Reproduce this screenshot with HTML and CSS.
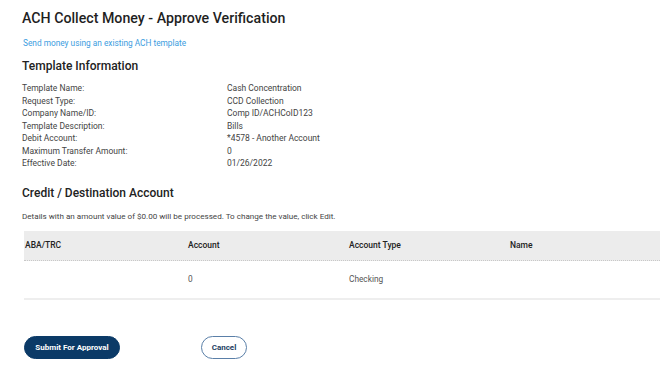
FILE: index.html
```html
<!DOCTYPE html>
<html>
<head>
<meta charset="utf-8">
<link rel="stylesheet" href="styles.css">
</head>
<body>
<main class="page">
  <h1 class="title">ACH Collect Money - Approve Verification</h1>
  <a class="link" href="#">Send money using an existing ACH template</a>
  <h2 class="section">Template Information</h2>
  <dl class="info">
    <dt>Template Name:</dt><dd>Cash Concentration</dd>
    <dt>Request Type:</dt><dd>CCD Collection</dd>
    <dt>Company Name/ID:</dt><dd>Comp ID/ACHCoID123</dd>
    <dt>Template Description:</dt><dd>Bills</dd>
    <dt>Debit Account:</dt><dd>*4578 - Another Account</dd>
    <dt>Maximum Transfer Amount:</dt><dd>0</dd>
    <dt>Effective Date:</dt><dd>01/26/2022</dd>
  </dl>
  <h2 class="section section-credit">Credit / Destination Account</h2>
  <p class="note">Details with an amount value of $0.00 will be processed. To change the value, click Edit.</p>
  <div class="table">
    <div class="thead">
      <div>ABA/TRC</div><div>Account</div><div>Account Type</div><div>Name</div>
    </div>
    <div class="trow">
      <div></div><div>0</div><div>Checking</div><div></div>
    </div>
  </div>
  <div class="actions">
    <button class="btn btn-primary">Submit For Approval</button>
    <button class="btn btn-secondary">Cancel</button>
  </div>
</main>
</body>
</html>
```

FILE: styles.css
```css
* { box-sizing: border-box; }
body {
  margin: 0;
  background: #fff;
  font-family: Roboto, "Liberation Sans", sans-serif;
  color: #333;
}
.page {
  padding: 8px 0 0 22px;
  display: flex;
  flex-direction: column;
  align-items: flex-start;
}
.title {
  margin: 0;
  font-size: 14.2px;
  font-weight: 500;
  color: #1f1f1f;
  line-height: 20px;
}
.link {
  margin: 9px 0 0 1px;
  font-size: 8.3px;
  color: #3b9de0;
  text-decoration: none;
  line-height: 12px;
}
.section {
  margin: 9px 0 0 0;
  font-size: 12px;
  font-weight: 500;
  color: #222;
  line-height: 16px;
}
.info {
  margin: 8px 0 0 0;
  display: grid;
  grid-template-columns: 205px auto;
  font-size: 8.5px;
  line-height: 12.5px;
  color: #444;
}
.info dt, .info dd { margin: 0; }
.section-credit { margin-top: 15px; }
.note {
  margin: 9px 0 0 0;
  font-size: 8.1px;
  line-height: 12px;
  color: #444;
}
.table {
  margin-top: 9px;
  margin-left: 2px;
  width: 636px;
  border-bottom: 2px solid #eeeeee;
}
.thead, .trow {
  display: grid;
  grid-template-columns: 163px 161px 161px 1fr;
  padding-left: 1px;
}
.thead {
  background: #ececec;
  height: 30px;
  align-items: center;
  font-size: 8.5px;
  font-weight: 500;
  color: #222;
  border-bottom: 1px dotted #c8c8c8;
}
.trow {
  height: 37px;
  align-items: center;
  font-size: 8.3px;
  color: #555;
}
.actions {
  margin-top: 36px;
  margin-left: 2px;
  display: flex;
  gap: 81px;
}
.btn {
  height: 23px;
  border-radius: 12px;
  font-family: Roboto, "Liberation Sans", sans-serif;
  font-size: 8px;
  font-weight: 700;
  padding: 0;
  white-space: nowrap;
  cursor: pointer;
}
.btn-primary {
  background: #0b3a67;
  color: #fff;
  border: 1px solid #0b3a67;
  width: 96px;
}
.btn-secondary {
  background: #fff;
  color: #1e3e63;
  border: 1px solid #5a7fa8;
  width: 46px;
}
```
